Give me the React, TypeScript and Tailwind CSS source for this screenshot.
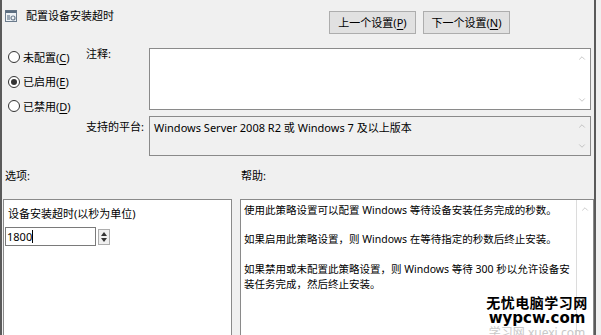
import { ChevronDown, ChevronUp } from "lucide-react";

const font = { fontFamily: '"Noto Sans", "Noto Sans CJK SC", sans-serif' };

function Key({ k }: { k: string }) {
    return (
        <>
            (<span className="underline underline-offset-2">{k}</span>)
        </>
    );
}

function Radio({ label, k, checked }: { label: string; k: string; checked?: boolean }) {
    return (
        <div className="flex items-center gap-[3px] h-[12px]">
            <span className="w-[12px] h-[12px] rounded-full border border-[#333] bg-white flex items-center justify-center">
                {checked && <span className="w-[6px] h-[6px] rounded-full bg-[#333]" />}
            </span>
            <span className="text-[11px] leading-none text-black">
                {label}
                <Key k={k} />
            </span>
        </div>
    );
}

function ScrollArrows() {
    return (
        <div className="w-[17px] flex flex-col items-center justify-between py-[4px] text-[#a6a6a6]">
            <ChevronUp className="w-[10px] h-[10px]" strokeWidth={1.5} />
            <ChevronDown className="w-[10px] h-[10px]" strokeWidth={1.5} />
        </div>
    );
}

function TitleIcon() {
    return (
        <svg width="12" height="12" viewBox="0 0 12 12" className="shrink-0">
            <rect x="0.5" y="0.5" width="11" height="11" fill="#eef2f6" stroke="#6b7b8c" />
            <rect x="0.5" y="0.5" width="11" height="2.5" fill="#5b6d80" />
            <rect x="2" y="5" width="3" height="5" fill="#9aa8b6" />
            <circle cx="8" cy="8" r="2" fill="none" stroke="#6b7b8c" strokeWidth="1.2" />
        </svg>
    );
}

export default function App() {
    return (
        <div className="w-[601px] h-[335px] bg-[#f0f0f0] overflow-hidden text-black" style={font}>
            <div className="w-[596px] h-full border-l-2 border-r-2 border-[#5a5a5a] flex flex-col">
                {/* header */}
                <div className="h-[48px] shrink-0 flex items-start pt-[10px] pl-[3px] pr-[84px]">
                    <div className="flex items-center gap-[9px]">
                        <TitleIcon />
                        <span className="text-[11px] leading-[12px]">配置设备安装超时</span>
                    </div>
                    <div className="ml-auto flex gap-[7px] pt-[1px]">
                        <button className="w-[87px] h-[23px] bg-[#e1e1e1] border border-[#adadad] text-[11px] leading-none">
                            上一个设置<Key k="P" />
                        </button>
                        <button className="w-[87px] h-[23px] bg-[#e1e1e1] border border-[#adadad] text-[11px] leading-none">
                            下一个设置<Key k="N" />
                        </button>
                    </div>
                </div>

                {/* state + comment + platform */}
                <div className="h-[108px] shrink-0 flex">
                    <div className="w-[84px] pl-[6px] pt-[3px] flex flex-col gap-[12.5px]">
                        <Radio label="未配置" k="C" />
                        <Radio label="已启用" k="E" checked />
                        <Radio label="已禁用" k="D" />
                    </div>
                    <div className="flex-1 grid grid-cols-[63px_1fr] grid-rows-[62px_40px] gap-y-[6px] pr-[3px]">
                        <div className="text-[11px] leading-none">注释:</div>
                        <div className="bg-white border border-[#8a8a8a] flex">
                            <div className="flex-1" />
                            <ScrollArrows />
                        </div>
                        <div className="text-[11px] leading-none pt-[5px]">支持的平台:</div>
                        <div className="bg-[#f0f0f0] border border-[#8a8a8a] flex">
                            <div className="flex-1 text-[11px] leading-none pl-[4px] pt-[5px]">
                                Windows Server 2008 R2 或 Windows 7 及以上版本
                            </div>
                            <ScrollArrows />
                        </div>
                    </div>
                </div>

                {/* section labels */}
                <div className="h-[43px] shrink-0 flex items-start pt-[14px] text-[11px] leading-none pl-[3px]">
                    <span className="w-[236px]">选项:</span>
                    <span>帮助:</span>
                </div>

                {/* options + help */}
                <div className="flex-1 min-h-0 flex gap-[8px] pl-[1px] relative">
                    <div className="w-[229px] h-[150px] shrink-0 bg-white border border-[#8a8a8a] pt-[8px]">
                        <div className="text-[11px] leading-none pl-[4px]">设备安装超时(以秒为单位)</div>
                        <div className="flex items-center gap-[2px] mt-[8px] pl-[1px]">
                            <div className="w-[91px] h-[19px] border border-[#7a7a7a] bg-white flex items-center pl-[1px] text-[11px] leading-none">
                                1800<span className="w-px h-[13px] bg-black" />
                            </div>
                            <div className="w-[12px] h-[16px] border border-[#adadad] bg-[#f0f0f0] flex flex-col items-center justify-center gap-[2px]">
                                <svg width="6" height="4" viewBox="0 0 6 4"><path d="M3 0 L6 4 L0 4 Z" fill="#333" /></svg>
                                <svg width="6" height="4" viewBox="0 0 6 4"><path d="M0 0 L6 0 L3 4 Z" fill="#333" /></svg>
                            </div>
                        </div>
                    </div>
                    <div className="flex-1 h-[150px] bg-white border border-[#8a8a8a] flex">
                        <div className="flex-1 pl-[3px] pt-[3px] text-[10.5px] leading-[15px] border-r border-[#dcdcdc] whitespace-nowrap">
                            <p>使用此策略设置可以配置 Windows 等待设备安装任务完成的秒数。</p>
                            <p className="mt-[14px]">如果启用此策略设置，则 Windows 在等待指定的秒数后终止安装。</p>
                            <p className="mt-[15px]">
                                如果禁用或未配置此策略设置，则 Windows 等待 300 秒以允许设备安
                                <br />
                                装任务完成，然后终止安装。
                            </p>
                        </div>
                        <div className="w-[16px] flex justify-center pt-[4px] text-[#b0b0b0]">
                            <ChevronUp className="w-[10px] h-[10px]" strokeWidth={1.5} />
                        </div>
                    </div>

                    {/* watermark */}
                    <div className="absolute right-[1px] top-[96px] w-[112px] flex flex-col items-center leading-none">
                        <span className="text-[14px] font-bold leading-[16px] tracking-[0.5px]">无忧电脑学习网</span>
                        <span className="text-[15px] font-bold leading-[15px]" style={{ fontFamily: '"DejaVu Sans", sans-serif' }}>wypcw.com</span>
                        <span className="text-[12px] leading-[13px] text-[#c8c8c8]">学习网 xuexi.com</span>
                    </div>
                </div>
            </div>
        </div>
    );
}
